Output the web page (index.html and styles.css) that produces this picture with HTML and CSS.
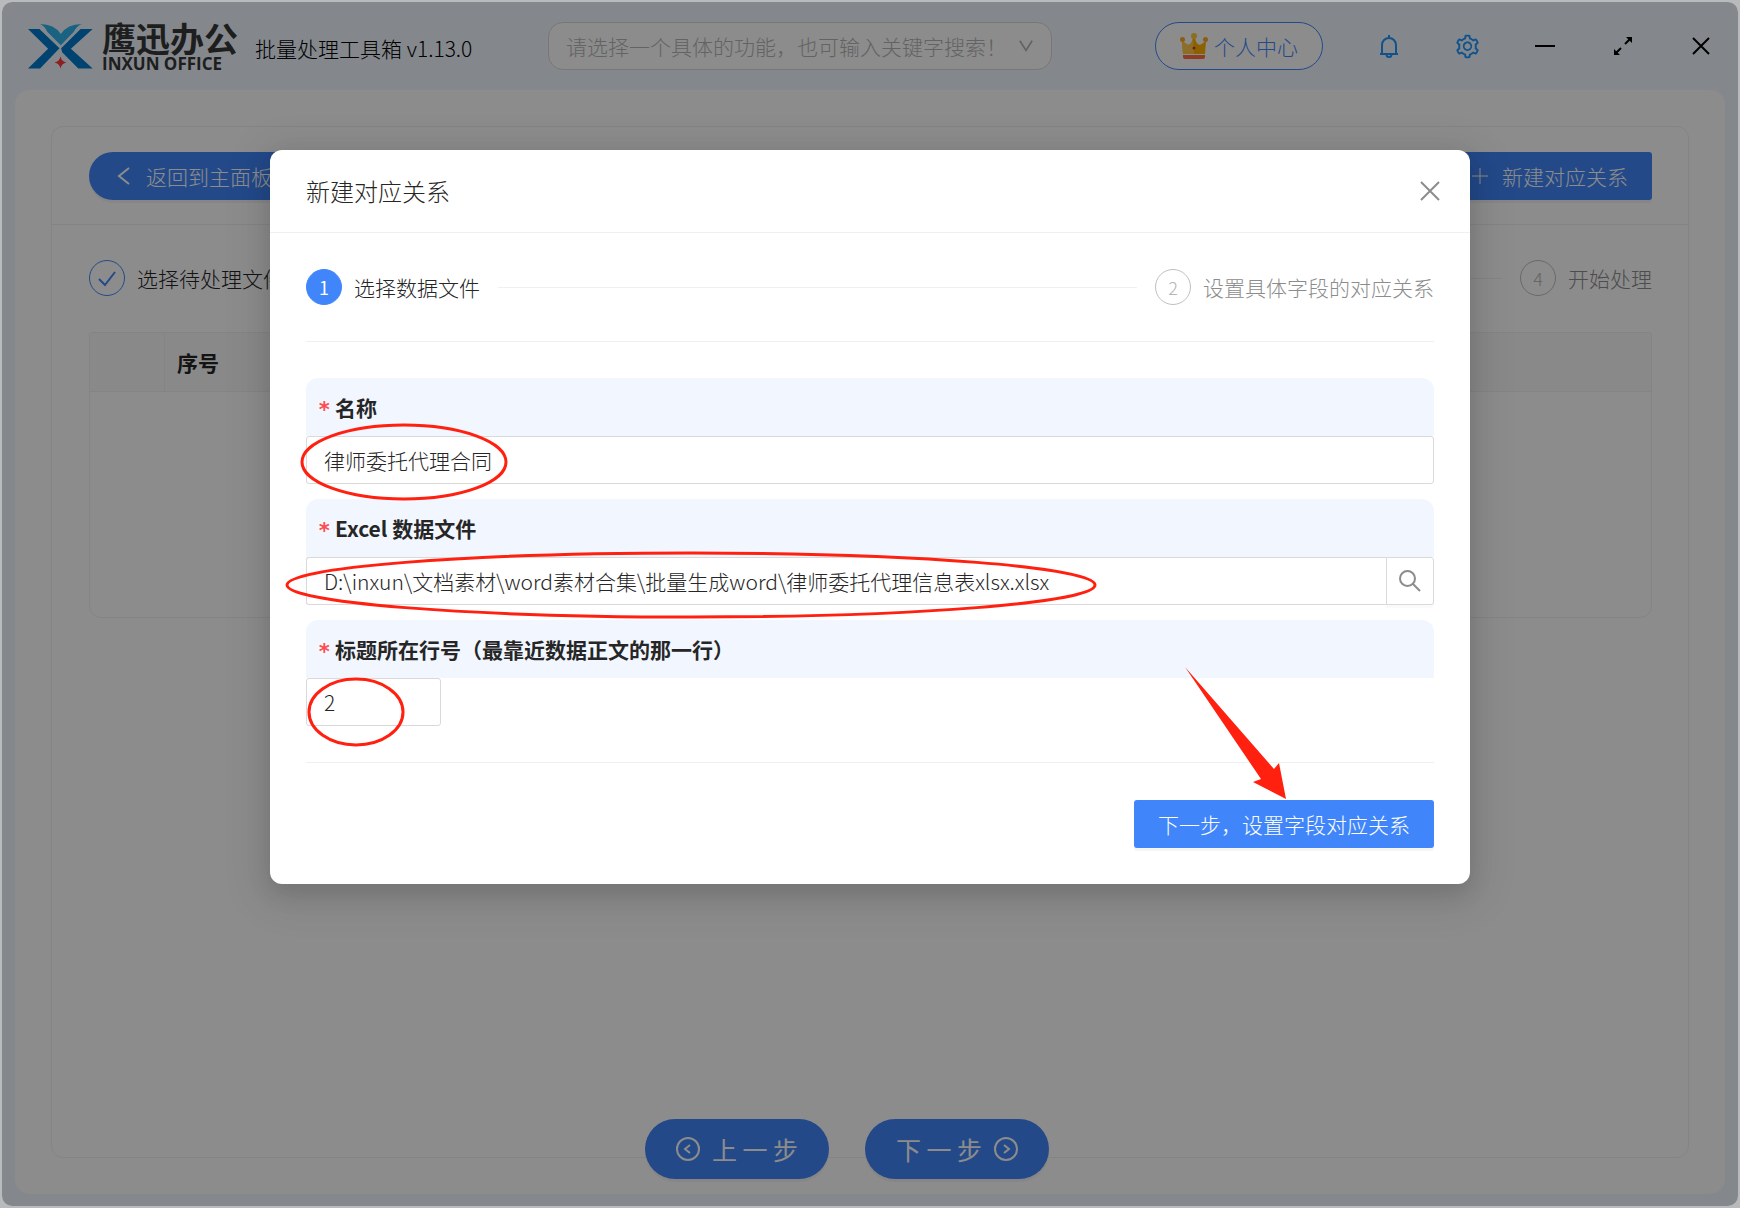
FILE: index.html
```html
<!DOCTYPE html>
<html lang="zh-CN">
<head>
    <meta charset="UTF-8">
    <meta name="viewport" content="width=device-width, initial-scale=1.0">
    <title>鹰迅办公 批量处理工具箱</title>
    <link rel="stylesheet" href="styles.css">
</head>
<body>
    <div class="window">
        <header class="topbar">
            <div class="brand">
                <svg class="logo-mark" viewBox="14 16 194 136">
                    <path fill="#0078cc" d="M14 33H48L108 91L50 151H14L74 92Z"/>
                    <path fill="#0078cc" d="M171 33H207L142 92L207 151H164L116 103L113 91Z"/>
                    <path fill="#2fb2ec" d="M50 18Q92 18 112 48Q132 18 174 18Q160 24 150 42L112 82L72 42Q64 24 50 18Z"/>
                    <path fill="#ff3c3c" d="M111 115Q114 130 129 133Q114 136 111 151Q108 136 93 133Q108 130 111 115Z"/>
                </svg>
                <div class="logo-text">
                    <span class="logo-cn">鹰迅办公</span>
                    <span class="logo-en">INXUN OFFICE</span>
                </div>
                <span class="app-title">批量处理工具箱 v1.13.0</span>
            </div>
            <label class="search">
                <input type="text" placeholder="请选择一个具体的功能，也可输入关键字搜索！" aria-label="搜索功能">
                <svg class="icon-down" viewBox="0 0 16 16"><path d="M1 2L8 13L15 2"/></svg>
            </label>
            <div class="tools">
                <button class="user-btn">
                    <svg class="crown" viewBox="0 0 28 26">
                        <path fill="#ffb300" d="M3 21L2 8L8 12Q12 11 13 5H15Q16 11 20 12L26 8L25 21Z"/>
                        <path fill="#ffc94a" d="M3 21L2 8L8 12Q12 11 13 5L14 21Z"/>
                        <circle fill="#ffa726" cx="2.500" cy="6.500" r="2.500"/>
                        <circle fill="#ffc940" cx="14" cy="3" r="3"/>
                        <circle fill="#ffa726" cx="25.500" cy="6.500" r="2.500"/>
                        <path fill="#ff7043" d="M3 22H25V24Q25 26 22 26H6Q3 26 3 24Z"/>
                        <circle fill="#d32f2f" cx="14" cy="15" r="1.500"/>
                    </svg>
                    个人中心
                </button>
                <button class="tool blue" aria-label="通知">
                    <svg width="24" height="24" viewBox="0 0 24 24"><path d="M3 20H21M5 20V11A7 7 0 0 1 19 11V20M12 4V1M9.500 20.500A2.500 2.500 0 0 0 14.500 20.500"/></svg>
                </button>
                <button class="tool blue" aria-label="设置">
                    <svg class="gear" viewBox="0 0 1024 1024"><path d="M924.8 625.7l-65.5-56c3.1-19 4.7-38.4 4.7-57.8s-1.6-38.8-4.7-57.8l65.5-56a32.03 32.03 0 009.3-35.2l-.9-2.6a443.74 443.74 0 00-79.7-137.9l-1.8-2.1a32.12 32.12 0 00-35.1-9.5l-81.3 28.9c-30-24.6-63.5-44-99.7-57.6l-15.7-85a32.05 32.05 0 00-25.8-25.7l-2.7-.5c-52.1-9.4-106.9-9.4-159 0l-2.7.5a32.05 32.05 0 00-25.8 25.7l-15.8 85.4a351.86 351.86 0 00-99 57.4l-81.9-29.1a32 32 0 00-35.1 9.5l-1.8 2.1a446.02 446.02 0 00-79.7 137.9l-.9 2.6c-4.5 12.5-.8 26.5 9.3 35.2l66.3 56.6c-3.1 18.8-4.6 38-4.6 57.1 0 19.2 1.5 38.4 4.6 57.1L99 625.5a32.03 32.03 0 00-9.3 35.2l.9 2.6c18.1 50.4 44.9 96.9 79.7 137.9l1.8 2.1a32.12 32.12 0 0035.1 9.5l81.9-29.1c29.8 24.5 63.1 43.9 99 57.4l15.8 85.4a32.05 32.05 0 0025.8 25.7l2.7.5a449.4 449.4 0 00159 0l2.7-.5a32.05 32.05 0 0025.8-25.7l15.7-85a350 350 0 0099.7-57.6l81.3 28.9a32 32 0 0035.1-9.5l1.8-2.1c34.8-41.1 61.6-87.5 79.7-137.9l.9-2.6c4.5-12.3.8-26.3-9.3-35zM788.3 465.9c2.5 15.1 3.8 30.6 3.8 46.1s-1.3 31-3.8 46.1l-6.6 40.1 74.7 63.9a370.03 370.03 0 01-42.6 73.6L721 702.8l-31.4 25.8c-23.9 19.6-50.5 35-79.3 45.8l-38.1 14.3-17.9 97a377.5 377.5 0 01-85 0l-17.9-97.2-37.8-14.5c-28.5-10.8-55-26.2-78.7-45.7l-31.4-25.9-93.4 33.2c-17-22.9-31.2-47.6-42.6-73.6l75.5-64.5-6.5-40c-2.4-14.9-3.7-30.3-3.7-45.5 0-15.3 1.2-30.6 3.7-45.5l6.5-40-75.5-64.5c11.3-26.1 25.6-50.7 42.6-73.6l93.4 33.2 31.4-25.9c23.7-19.5 50.2-34.9 78.7-45.7l37.9-14.3 17.9-97.2c28.1-3.2 56.8-3.2 85 0l17.9 97 38.1 14.3c28.7 10.8 55.4 26.2 79.3 45.8l31.4 25.8 92.8-32.9c17 22.9 31.2 47.6 42.6 73.6L781.8 426l6.5 39.9zM512 326c-97.2 0-176 78.800-176 176s78.800 176 176 176 176-78.800 176-176-78.800-176-176-176zm79.2 255.2A111.6 111.6 0 01512 614c-29.9 0-58-11.7-79.2-32.8A111.6 111.6 0 01400 502c0-29.9 11.7-58 32.8-79.2C454 401.6 482.1 390 512 390c29.9 0 58 11.6 79.2 32.8A111.6 111.6 0 01624 502c0 29.9-11.7 58-32.8 79.2z"/></svg>
                </button>
                <button class="tool" aria-label="最小化">
                    <svg width="24" height="24" viewBox="0 0 24 24"><path d="M2 12H22"/></svg>
                </button>
                <button class="tool" aria-label="最大化">
                    <svg width="24" height="24" viewBox="0 0 24 24"><path d="M14 10L19 5M10 14L5 19"/><path fill="currentColor" stroke="none" d="M15 3H21V9ZM3 15V21H9Z"/></svg>
                </button>
                <button class="tool" aria-label="关闭">
                    <svg width="24" height="24" viewBox="0 0 24 24"><path d="M4 4L20 20M20 4L4 20"/></svg>
                </button>
            </div>
        </header>

        <main class="content">
            <section class="card">
                <div class="card-head">
                    <button class="btn btn-round">
                        <svg width="16" height="20" viewBox="0 0 16 20"><path d="M13 2L3 10L13 18"/></svg>
                        返回到主面板
                    </button>
                    <button class="btn">
                        <svg width="20" height="20" viewBox="0 0 20 20"><path d="M2 10H18M10 2V18"/></svg>
                        新建对应关系
                    </button>
                </div>
                <div class="card-body">
                    <div class="steps">
                        <div class="step">
                            <span class="step-no done"><svg width="20" height="20" viewBox="0 0 20 20"><path d="M2 11L8 17L18 4"/></svg></span>
                            <span>选择待处理文件</span>
                        </div>
                        <span class="step-line"></span>
                        <div class="step wait">
                            <span class="step-no">4</span>
                            <span>开始处理</span>
                        </div>
                    </div>
                    <table class="grid">
                        <thead>
                            <tr><th class="col-check"></th><th class="col-no">序号</th><th></th></tr>
                        </thead>
                        <tbody>
                            <tr><td colspan="3"></td></tr>
                        </tbody>
                    </table>
                </div>
            </section>
            <div class="pager">
                <button class="btn-page">
                    <svg width="24" height="24" viewBox="0 0 24 24"><circle cx="12" cy="12" r="11"/><path d="M14 8L9 12L14 16"/></svg>
                    上 一 步
                </button>
                <button class="btn-page">
                    下 一 步
                    <svg width="24" height="24" viewBox="0 0 24 24"><circle cx="12" cy="12" r="11"/><path d="M10 8L15 12L10 16"/></svg>
                </button>
            </div>
        </main>

        <div class="mask"></div>
    </div>

    <div class="modal-wrap">
        <div class="modal" role="dialog" aria-labelledby="modal-title">
            <div class="modal-head">
                <h2 id="modal-title">新建对应关系</h2>
                <button class="modal-close" aria-label="关闭">
                    <svg width="20" height="20" viewBox="0 0 20 20"><path d="M1 1L19 19M19 1L1 19"/></svg>
                </button>
            </div>
            <form class="modal-body">
                <div class="steps">
                    <div class="step">
                        <span class="step-no active">1</span>
                        <span>选择数据文件</span>
                    </div>
                    <span class="step-line"></span>
                    <div class="step wait">
                        <span class="step-no">2</span>
                        <span>设置具体字段的对应关系</span>
                    </div>
                </div>
                <hr>
                <div class="field">
                    <label for="name"><span class="star">*</span>名称</label>
                    <input id="name" type="text" value="律师委托代理合同">
                </div>
                <div class="field">
                    <label for="file"><span class="star">*</span>Excel 数据文件</label>
                    <div class="file-row">
                        <input id="file" type="text" value="D:\inxun\文档素材\word素材合集\批量生成word\律师委托代理信息表xlsx.xlsx">
                        <button type="button" aria-label="选择文件">
                            <svg width="24" height="24" viewBox="0 0 24 24"><circle cx="9.500" cy="9.500" r="7.500"/><path d="M15 15L22 22"/></svg>
                        </button>
                    </div>
                </div>
                <div class="field">
                    <label for="row"><span class="star">*</span>标题所在行号（最靠近数据正文的那一行）</label>
                    <input id="row" class="short" type="text" value="2">
                </div>
                <hr>
                <div class="modal-foot">
                    <button type="button" class="btn">下一步，设置字段对应关系</button>
                </div>
            </form>
            <!-- 操作标注 -->
            <svg class="marks" width="1200" height="734" viewBox="0 0 1200 734">
                <ellipse cx="134" cy="312" rx="102" ry="37"/>
                <ellipse cx="421" cy="435" rx="404" ry="32"/>
                <ellipse cx="86" cy="562" rx="47" ry="33"/>
                <path d="M915 517L1004 619L1009 613L1016 649L983 632L991 629Z"/>
            </svg>
        </div>
    </div>
</body>
</html>
```
FILE: styles.css
```css
* {
    box-sizing: border-box;
}

body {
    margin: 0;
    height: 100vh;
    padding: 2px;
    background: #b9babc;
    font-family: "Noto Sans CJK SC", sans-serif;
    font-size: 21px;
    font-weight: 300;
    line-height: 32px;
    color: #262626;
}

button, input {
    font: inherit;
    color: inherit;
}

button {
    cursor: pointer;
}

svg {
    flex: none;
    fill: none;
    stroke: currentColor;
    stroke-width: 2;
}

.window {
    position: relative;
    display: flex;
    flex-direction: column;
    height: 100%;
    border-radius: 10px;
    background: #f0f8ff;
    overflow: hidden;
}

/* 遮罩 */
.mask {
    position: absolute;
    inset: 0;
    background: rgba(0, 0, 0, 0.45);
}

/* 顶部栏 */
.topbar {
    display: flex;
    align-items: center;
    height: 88px;
    padding: 0 13px 0 26px;
}

.brand {
    display: flex;
    align-items: center;
    flex: 0 0 520px;
    color: #000;
}

.logo-mark {
    width: 65px;
    height: 46px;
    stroke: none;
}

.logo-text {
    display: flex;
    flex-direction: column;
    gap: 4px;
    margin: 0 17px 0 9px;
    color: #383838;
    font-weight: 700;
}

.logo-cn {
    font-size: 34px;
    line-height: 32px;
}

.logo-en {
    font-family: "Open Sans", sans-serif;
    font-size: 17px;
    line-height: 12px;
}

.app-title {
    padding-top: 4px;
    white-space: nowrap;
}

.search {
    display: flex;
    align-items: center;
    flex: 0 1 504px;
    height: 48px;
    padding: 0 17px;
    border: 1px solid #d9d9d9;
    border-radius: 15px;
    background: #fff;
}

.search input {
    flex: 1;
    min-width: 0;
    padding: 0;
    border: 0;
    outline: 0;
    background: none;
}

.search input::placeholder {
    color: #b5b5b5;
}

.icon-down {
    width: 16px;
    height: 14px;
    color: #b5b5b5;
}

.tools {
    display: flex;
    align-items: center;
    gap: 30px;
    margin-left: auto;
}

.user-btn {
    display: flex;
    align-items: center;
    gap: 6px;
    height: 48px;
    margin-right: 12px;
    padding: 0 24px;
    border: 1px solid #4086fa;
    border-radius: 24px;
    background: #fff;
    color: #4086fa;
}

.crown {
    width: 28px;
    height: 26px;
    stroke: none;
}

.tool {
    display: flex;
    align-items: center;
    justify-content: center;
    width: 48px;
    height: 48px;
    padding: 0;
    border: 0;
    background: none;
    color: #000;
}

.tool.blue {
    color: #1c96ff;
}

.gear {
    width: 27px;
    height: 27px;
    fill: currentColor;
    stroke: none;
}

/* 主内容 */
.content {
    flex: 1;
    display: flex;
    flex-direction: column;
    margin: 0 13px 12px;
    padding: 36px 36px 0;
    border-radius: 15px;
    background: #fff;
}

.card {
    flex: 1;
    margin-bottom: 36px;
    border: 1px solid #f0f0f0;
    border-radius: 12px;
}

.card-head {
    display: flex;
    justify-content: space-between;
    padding: 25px 36px 24px 37px;
    border-bottom: 1px solid #f0f0f0;
}

.card-body {
    padding: 35px 36px 35px 37px;
}

.btn {
    display: flex;
    align-items: center;
    gap: 12px;
    height: 48px;
    padding: 0 24px;
    border: 0;
    border-radius: 3px;
    background: #4086fa;
    box-shadow: 0 3px 0 rgba(0, 0, 0, 0.04);
    color: #fff;
}

.btn-round {
    gap: 14px;
    padding: 0 27px;
    border-radius: 24px;
}

.card-head .btn svg {
    stroke-width: 1;
}

.card-head .btn-round svg {
    stroke-width: 2;
}

.steps {
    display: flex;
    align-items: center;
    height: 36px;
}

.step {
    display: flex;
    align-items: center;
    gap: 12px;
}

.step-no {
    display: flex;
    align-items: center;
    justify-content: center;
    width: 36px;
    height: 36px;
    border: 1px solid #bfbfbf;
    border-radius: 50%;
    font-size: 18px;
    color: #b5b5b5;
}

.step-no.active {
    border-color: #4086fa;
    background: #4086fa;
    color: #fff;
    font-weight: 400;
}

.step-no.done {
    border-color: #4086fa;
    color: #4086fa;
}

.step.wait {
    color: #8c8c8c;
}

.step-line {
    flex: 1;
    height: 1px;
    margin: 0 18px;
    background: #f0f0f0;
}

.grid {
    width: 100%;
    margin-top: 36px;
    border: 1px solid #f0f0f0;
    border-radius: 3px 3px 12px 12px;
    border-collapse: separate;
    border-spacing: 0;
    table-layout: fixed;
}

.grid th {
    height: 59px;
    padding: 0 12px;
    border-bottom: 1px solid #f0f0f0;
    background: #fafafa;
    text-align: left;
    font-weight: 700;
}

.grid .col-check {
    width: 75px;
    border-right: 1px solid #f0f0f0;
}

.grid .col-no {
    width: 180px;
}

.grid td {
    height: 225px;
}

.pager {
    position: absolute;
    right: 46px;
    bottom: 27px;
    left: 0;
    display: flex;
    justify-content: center;
    gap: 36px;
}

.btn-page {
    display: flex;
    align-items: center;
    justify-content: center;
    gap: 12px;
    width: 184px;
    height: 60px;
    border: 0;
    border-radius: 30px;
    background: #4086fa;
    box-shadow: 0 3px 0 rgba(0, 0, 0, 0.04);
    color: #fff;
    font-size: 25px;
    font-weight: 400;
}

/* 弹窗 */
.modal-wrap {
    position: absolute;
    inset: 0;
    padding: 150px 24px 0;
}

.modal {
    position: relative;
    max-width: 1200px;
    margin: 0 auto;
    border-radius: 12px;
    background: #fff;
    box-shadow: 0 9px 42px 12px rgba(0, 0, 0, 0.08), 0 9px 24px rgba(0, 0, 0, 0.12);
}

.modal-head {
    display: flex;
    align-items: center;
    justify-content: space-between;
    height: 83px;
    padding: 0 30px 0 36px;
    border-bottom: 1px solid #f0f0f0;
}

.modal-head h2 {
    margin: 0;
    font-size: 24px;
    font-weight: 300;
}

.modal-close {
    display: flex;
    padding: 0;
    border: 0;
    background: none;
    color: #8c8c8c;
}

.modal-body {
    padding: 36px;
}

hr {
    height: 1px;
    margin: 36px 0;
    border: 0;
    background: #f0f0f0;
}

.field + .field {
    margin-top: 15px;
}

.field label {
    display: flex;
    align-items: center;
    height: 58px;
    padding: 0 12px;
    border-radius: 12px 12px 0 0;
    background: #f2f7ff;
    font-weight: 700;
}

.star {
    width: 17px;
    padding-top: 6px;
    font-family: "DejaVu Sans Mono", monospace;
    color: #ff4d4f;
}

.field input {
    display: block;
    width: 100%;
    height: 48px;
    padding: 0 17px;
    border: 1px solid #d9d9d9;
    border-radius: 3px;
    outline: 0;
    background: #fff;
}

.field .short {
    width: 135px;
}

.file-row {
    display: flex;
}

.file-row input {
    flex: 1;
    border-right: 0;
    border-radius: 3px 0 0 3px;
}

.file-row button {
    display: flex;
    align-items: center;
    justify-content: center;
    width: 48px;
    border: 1px solid #d9d9d9;
    border-radius: 0 3px 3px 0;
    background: #fff;
    box-shadow: 0 3px 0 rgba(0, 0, 0, 0.02);
    color: #8c8c8c;
}

.modal-foot {
    display: flex;
    justify-content: flex-end;
    padding-top: 1px;
}

.marks {
    position: absolute;
    top: 0;
    left: 0;
    overflow: visible;
    pointer-events: none;
    stroke: #ff2010;
    stroke-width: 3;
}

.marks path {
    fill: #ff2010;
    stroke: none;
}
```
